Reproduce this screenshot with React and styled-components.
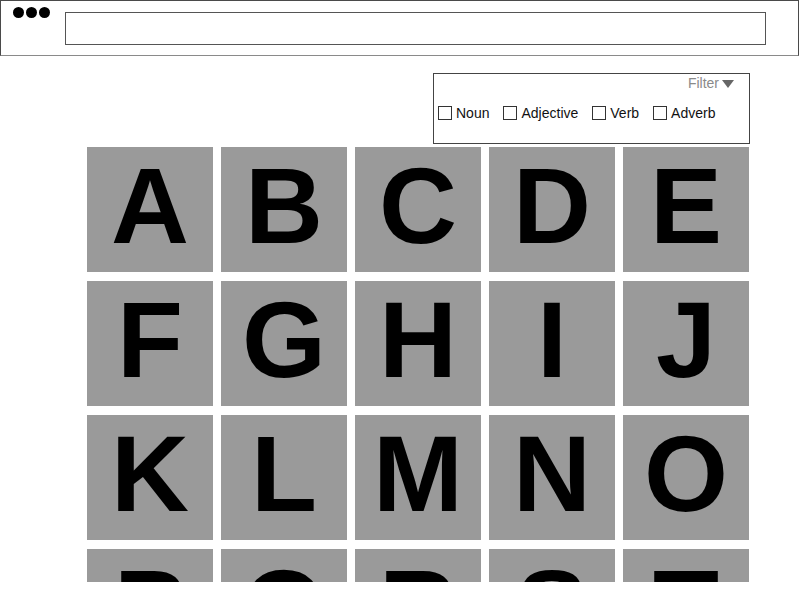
import styled, { createGlobalStyle } from "styled-components";

const GlobalStyle = createGlobalStyle`
  body {
    margin: 0;
    background: #fff;
    font-family: "Liberation Sans", Arial, sans-serif;
  }
`;

const Page = styled.div`
  width: 799px;
  height: 590px;
  overflow: hidden;
`;

/* browser chrome at the top */
const TopBar = styled.header`
  box-sizing: border-box;
  width: 799px;
  height: 56px;
  border: 1px solid #4a4a4a;
  border-bottom-color: #8a8a8a;
  display: flex;
  align-items: flex-start;
  padding: 11px 32px 0 12px;
  gap: 15px;
`;

const Dots = styled.div`
  display: flex;
  gap: 2px;
  margin-top: -5px;
`;

const Dot = styled.span`
  width: 11px;
  height: 11px;
  border-radius: 50%;
  background: #000;
`;

const AddressBar = styled.div`
  flex: 1;
  box-sizing: border-box;
  height: 33px;
  border: 1px solid #555;
`;

const Content = styled.main`
  display: flex;
  flex-direction: column;
  padding-left: 87px;
`;

const FilterBox = styled.section`
  box-sizing: border-box;
  width: 317px;
  height: 71px;
  margin: 17px 0 0 346px;
  border: 1px solid #444;
  display: flex;
  flex-direction: column;
  padding: 1px 15px 0 4px;
`;

const FilterToggle = styled.div`
  align-self: flex-end;
  display: flex;
  align-items: center;
  gap: 3px;
  color: #8a8a8a;
  font-size: 14px;
  line-height: 16px;
`;

const Triangle = styled.span`
  width: 0;
  height: 0;
  border-left: 6px solid transparent;
  border-right: 6px solid transparent;
  border-top: 8px solid #666;
  margin-top: 1px;
`;

const Options = styled.div`
  display: flex;
  gap: 14px;
  margin-top: 14px;
`;

const Option = styled.label`
  display: flex;
  align-items: center;
  gap: 4px;
  font-size: 14px;
  color: #111;
`;

const Box = styled.span`
  box-sizing: border-box;
  width: 14px;
  height: 14px;
  border: 1px solid #333;
  background: #fff;
`;

const Grid = styled.div`
  margin-top: 3px;
  height: 435px;
  overflow: hidden;
  display: grid;
  grid-template-columns: repeat(5, 126px);
  grid-auto-rows: 125px;
  column-gap: 8px;
  row-gap: 9px;
`;

const Tile = styled.div`
  background: #9a9a9a;
  display: flex;
  align-items: center;
  justify-content: center;
  font-family: "Liberation Sans", Arial, sans-serif;
  font-weight: 700;
  font-size: 108px;
  line-height: 1;
  color: #000;
  padding-bottom: 8px;
  box-sizing: border-box;
`;

const letters = "ABCDEFGHIJKLMNOPQRST".split("");
const kinds = ["Noun", "Adjective", "Verb", "Adverb"];

const App = () => (
  <Page>
    <GlobalStyle />
    <TopBar>
      <Dots>
        <Dot />
        <Dot />
        <Dot />
      </Dots>
      <AddressBar />
    </TopBar>
    <Content>
      <FilterBox>
        <FilterToggle>
          Filter
          <Triangle />
        </FilterToggle>
        <Options>
          {kinds.map((k) => (
            <Option key={k}>
              <Box />
              {k}
            </Option>
          ))}
        </Options>
      </FilterBox>
      <Grid>
        {letters.map((l) => (
          <Tile key={l}>{l}</Tile>
        ))}
      </Grid>
    </Content>
  </Page>
);

export default App;
